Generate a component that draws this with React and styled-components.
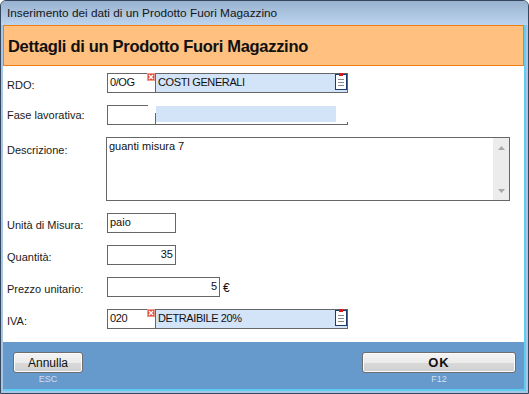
import React from 'react';
import styled, { createGlobalStyle } from 'styled-components';

const GlobalStyle = createGlobalStyle`
  html, body {
    margin: 0;
    padding: 0;
    background: #ffffff;
  }
  * {
    box-sizing: border-box;
  }
`;

const Window = styled.div`
  width: 529px;
  height: 394px;
  display: flex;
  flex-direction: column;
  border: 1px solid #34475c;
  border-radius: 6px 6px 0 0;
  background: #a9c6e6;
  padding: 0 2px 2px 1px;
  font-family: "Liberation Sans", Arial, sans-serif;
  overflow: hidden;
`;

const TitleBar = styled.div`
  height: 24px;
  flex-shrink: 0;
  display: flex;
  align-items: center;
  padding-left: 6px;
  margin: 0 -2px 0 -1px;
  background: linear-gradient(to bottom, #98b2cf, #bcd4ee);
  font-size: 11.8px;
  color: #151515;
`;

const Client = styled.div`
  flex: 1;
  display: flex;
  flex-direction: column;
  margin-left: 1px;
  border-right: 2px solid #5ccdf0;
  border-bottom: 2px solid #5ccdf0;
`;

const Header = styled.div`
  height: 41px;
  flex-shrink: 0;
  display: flex;
  align-items: center;
  padding: 2px 0 0 4px;
  background: #ffc080;
  border: 1px solid #f07d14;
  font-size: 16.5px;
  letter-spacing: -0.3px;
  font-weight: bold;
  color: #111111;
`;

const Body = styled.div`
  height: 276px;
  flex-shrink: 0;
  background: #ffffff;
  display: flex;
  flex-direction: column;
  gap: 12px;
  padding: 7px 0 0 4px;
`;

const Row = styled.div`
  display: flex;
  align-items: flex-start;
`;

const Label = styled.div`
  width: 100px;
  flex-shrink: 0;
  padding-top: ${(p) => p.$top || 5}px;
  font-size: 11px;
  color: #1a1a1a;
`;

const TextBox = styled.div`
  width: ${(p) => p.$width}px;
  height: 20px;
  border: 1px solid #666666;
  background: #ffffff;
  font-size: 11px;
  color: #111111;
  display: flex;
  align-items: center;
  justify-content: ${(p) => (p.$right ? 'flex-end' : 'flex-start')};
  padding: 0 2px 3px 2px;
`;

const Suffix = styled.span`
  font-size: 12px;
  color: #111111;
  margin: 4px 0 0 3px;
`;

const Lookup = styled.div`
  position: relative;
  width: 241px;
  height: 20px;
  display: flex;
  border: 1px solid #666666;
  border-top-color: ${(p) => (p.$broken ? 'transparent' : '#666666')};
  border-right-color: ${(p) => (p.$broken ? 'transparent' : '#666666')};
  font-size: 11px;
  color: #111111;
  letter-spacing: -0.4px;
`;

const TopStub = styled.span`
  position: absolute;
  left: -1px;
  top: -1px;
  width: 41px;
  height: 1px;
  background: #666666;
`;

const RightStub = styled.span`
  position: absolute;
  right: -1px;
  bottom: -1px;
  width: 1px;
  height: 3px;
  background: #666666;
`;

const Code = styled.div`
  position: relative;
  width: 48px;
  flex-shrink: 0;
  border-right: 1px solid ${(p) => (p.$broken ? 'transparent' : '#666666')};
  padding: 0 0 3px 2px;
  display: flex;
  align-items: center;
  &::after {
    content: '';
    display: ${(p) => (p.$broken ? 'block' : 'none')};
    position: absolute;
    right: -1px;
    top: 7px;
    bottom: 0;
    width: 1px;
    background: #666666;
  }
`;

const Desc = styled.div`
  position: relative;
  flex: 1;
  background: #d3e3f8;
  padding: 0 0 3px 2px;
  display: flex;
  align-items: center;
  margin: ${(p) => (p.$broken ? '0 11px 2px 0' : '0')};
`;

const Badge = styled.svg`
  position: absolute;
  right: 0;
  top: -1px;
`;

const PickIcon = styled.svg`
  position: absolute;
  right: 0;
  top: -1px;
`;

const TextArea = styled.div`
  position: relative;
  width: 404px;
  height: 64px;
  margin-left: -1px;
  border: 1px solid #666666;
  background: #ffffff;
  font-size: 11px;
  color: #111111;
  padding: 2px 2px;
`;

const ScrollBar = styled.div`
  position: absolute;
  right: 0;
  top: 0;
  bottom: 0;
  width: 16px;
  background: #ececec;
  display: flex;
  flex-direction: column;
  justify-content: space-between;
  align-items: center;
  padding: 8px 0 7px;
`;

const Footer = styled.div`
  flex: 1;
  background: #6699cc;
  display: flex;
  justify-content: space-between;
  padding: 10px 8px 0 10px;
`;

const ButtonGroup = styled.div`
  display: flex;
  flex-direction: column;
  align-items: center;
  gap: 1px;
`;

const Button = styled.button`
  width: ${(p) => p.$width}px;
  height: 21px;
  border: 1px solid #6e6e6e;
  border-radius: 3px;
  background: linear-gradient(to bottom, #f4f4f4 0%, #ebebeb 50%, #d9d9d9 51%, #d0d0d0 100%);
  font-family: "Liberation Sans", Arial, sans-serif;
  font-size: ${(p) => (p.$bold ? 13 : 12)}px;
  font-weight: ${(p) => (p.$bold ? 'bold' : 'normal')};
  letter-spacing: ${(p) => (p.$bold ? '1px' : '0')};
  color: #111111;
  padding: 0;
  box-shadow: inset 0 0 0 1px #fbfbfb;
`;

const KeyHint = styled.span`
  font-size: 9px;
  color: #d4dfeb;
`;

function ClearBadge() {
  return (
    <Badge width="8" height="8" viewBox="0 0 8 8">
      <rect x="0" y="0" width="8" height="8" fill="#e04a3a" />
      <rect x="0.5" y="0.5" width="7" height="7" fill="none" stroke="#f29a88" strokeWidth="1" />
      <path d="M2 2 L6 6 M6 2 L2 6" stroke="#ffffff" strokeWidth="1.5" />
    </Badge>
  );
}

function ListIcon() {
  return (
    <PickIcon width="12" height="17" viewBox="0 0 12 17">
      <rect x="0.5" y="1.5" width="11" height="15" fill="#ffffff" stroke="#1c3a6e" />
      <rect x="4" y="0" width="4" height="3" fill="#d81818" />
      <path d="M3 6.5 H9 M3 9.5 H9 M3 12.5 H9" stroke="#8a8a8a" strokeWidth="1" />
    </PickIcon>
  );
}

function LookupField({ code, text, broken }) {
  return (
    <Lookup $broken={broken}>
      {broken && <TopStub />}
      {broken && <RightStub />}
      <Code $broken={broken}>
        {code}
        {!broken && <ClearBadge />}
      </Code>
      <Desc $broken={broken}>
        {text}
        {!broken && <ListIcon />}
      </Desc>
    </Lookup>
  );
}

export default function App() {
  return (
    <>
      <GlobalStyle />
      <Window>
        <TitleBar>Inserimento dei dati di un Prodotto Fuori Magazzino</TitleBar>
        <Client>
          <Header>Dettagli di un Prodotto Fuori Magazzino</Header>
          <Body>
            <Row>
              <Label $top={6}>RDO:</Label>
              <LookupField code="0/OG" text="COSTI GENERALI" />
            </Row>
            <Row>
              <Label $top={4}>Fase lavorativa:</Label>
              <LookupField code="" text="" broken />
            </Row>
            <Row>
              <Label $top={7}>Descrizione:</Label>
              <TextArea>
                guanti misura 7
                <ScrollBar>
                  <svg width="7" height="4" viewBox="0 0 7 4">
                    <path d="M0 4 L3.5 0 L7 4 Z" fill="#a8a8a8" />
                  </svg>
                  <svg width="7" height="4" viewBox="0 0 7 4">
                    <path d="M0 0 L3.5 4 L7 0 Z" fill="#a8a8a8" />
                  </svg>
                </ScrollBar>
              </TextArea>
            </Row>
            <Row>
              <Label $top={6}>Unità di Misura:</Label>
              <TextBox $width={69}>paio</TextBox>
            </Row>
            <Row>
              <Label $top={6}>Quantità:</Label>
              <TextBox $width={69} $right>35</TextBox>
            </Row>
            <Row>
              <Label $top={6}>Prezzo unitario:</Label>
              <TextBox $width={113} $right>5</TextBox>
              <Suffix>€</Suffix>
            </Row>
            <Row>
              <Label $top={6}>IVA:</Label>
              <LookupField code="020" text="DETRAIBILE 20%" />
            </Row>
          </Body>
          <Footer>
            <ButtonGroup>
              <Button $width={70}>Annulla</Button>
              <KeyHint>ESC</KeyHint>
            </ButtonGroup>
            <ButtonGroup>
              <Button $width={154} $bold>OK</Button>
              <KeyHint>F12</KeyHint>
            </ButtonGroup>
          </Footer>
        </Client>
      </Window>
    </>
  );
}
